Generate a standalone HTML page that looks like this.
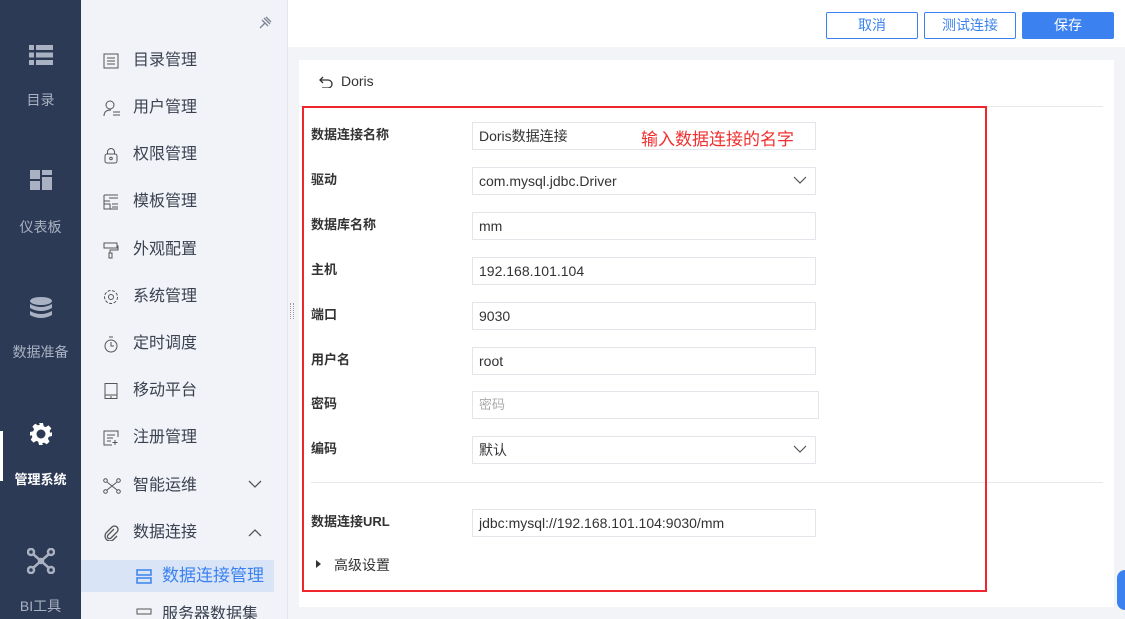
<!DOCTYPE html>
<html><head><meta charset="utf-8"><style>
*{box-sizing:border-box;margin:0;padding:0}
html,body{width:1125px;height:619px;overflow:hidden}
body{position:relative;background:#f3f4f7;font-family:"Liberation Sans","Noto Sans CJK SC",sans-serif;color:#333}
.side{position:absolute;left:0;top:0;width:81px;height:619px;background:#2d3a55}
.ic{position:absolute;left:0;width:81px}
.ic svg{display:block;margin:0 auto}
.lb{position:absolute;left:0;width:81px;text-align:center;color:#a9b1c2;font-size:14px;line-height:18px}
.menu{position:absolute;left:81px;top:0;width:207px;height:619px;background:#f1f3f8;border-right:1px solid #e3e6ec}
.mi{position:absolute;left:22px;font-size:16px;color:#3a4150;height:24px;line-height:24px}
.mi svg{position:absolute;left:0;top:4px}
.mi span{position:absolute;left:30px;white-space:nowrap}
.top{position:absolute;left:288px;top:0;width:837px;height:47px;background:#fff}
.btn{position:absolute;top:12px;height:27px;border:1px solid #3b82f0;color:#3b82f0;font-size:14px;text-align:center;line-height:25px;border-radius:2px;background:#fff}
.card{position:absolute;left:299px;top:60px;width:815px;height:547px;background:#fff}
.lab{position:absolute;left:311px;font-size:13px;font-weight:bold;color:#333;line-height:18px}
.inp{position:absolute;left:472px;width:344px;height:28px;border:1px solid #e3e5ea;font-size:14px;line-height:26px;padding-left:6px;color:#333;background:#fff}
.chev{position:absolute;right:8px;top:8px}
</style></head><body>
<div class="side">
 <div class="ic" style="top:45px"><svg width="24" height="20"><g fill="#a9b1c2"><rect x="0" y="0" width="5" height="5"/><rect x="7" y="0" width="17" height="5"/><rect x="0" y="7.5" width="5" height="5"/><rect x="7" y="7.5" width="17" height="5"/><rect x="0" y="15" width="5" height="5"/><rect x="7" y="15" width="17" height="5"/></g></svg></div>
 <div class="lb" style="top:91px">目录</div>
 <div class="ic" style="top:170px"><svg width="22" height="20"><g fill="#a9b1c2"><rect x="0" y="0" width="10" height="9"/><rect x="12" y="0" width="10" height="5"/><rect x="0" y="11" width="10" height="9"/><rect x="12" y="7" width="10" height="13"/></g></svg></div>
 <div class="lb" style="top:218px">仪表板</div>
 <div class="ic" style="top:297px"><svg width="24" height="22"><g fill="#a9b1c2"><ellipse cx="12" cy="4" rx="11" ry="4"/><path d="M1 7q11 6 22 0v4q-11 6-22 0z"/><path d="M1 14q11 6 22 0v4q-11 6-22 0z"/></g></svg></div>
 <div class="lb" style="top:343px">数据准备</div>
 <div style="position:absolute;left:0;top:431px;width:3px;height:50px;background:#fff"></div>
 <div class="ic" style="top:422px"><svg width="24" height="24" viewBox="0 0 24 24"><path fill="#fff" d="M10 1h4l.7 3.2 2 .9 2.8-1.7 2.8 2.8-1.7 2.8.9 2L23 10v4l-3.2.7-.9 2 1.7 2.8-2.8 2.8-2.8-1.7-2 .9L14 23h-4l-.7-3.2-2-.9-2.8 1.7-2.8-2.8 1.7-2.8-.9-2L1 14v-4l3.2-.7.9-2L3.4 4.5l2.8-2.8L9 3.4l2-.9z"/><circle cx="12" cy="12" r="4.5" fill="#2d3a55"/></svg></div>
 <div class="lb" style="top:471px;color:#fff;font-weight:bold;font-size:13px">管理系统</div>
 <div class="ic" style="top:548px"><svg width="28" height="26" viewBox="0 0 28 26"><g stroke="#a9b1c2" stroke-width="2.5" fill="none"><circle cx="4" cy="4" r="3"/><circle cx="24" cy="4" r="3"/><circle cx="4" cy="22" r="3"/><circle cx="24" cy="22" r="3"/><path d="M6 6l16 14M22 6L6 20"/><circle cx="14" cy="13" r="2"/></g></svg></div>
 <div class="lb" style="top:597px">BI工具</div>
</div>
<div class="menu">
 <svg style="position:absolute;left:177px;top:14px" width="16" height="16"><g stroke="#7a8294" stroke-width="1.3" fill="none"><path d="M2 14l5-5M6 4l6 6M8 3l5 5M4 6l6 6"/></g></svg>
 <div class="mi" style="top:49px"><svg width="16" height="16"><rect x="1" y="1" width="14" height="14" fill="none" stroke="#555"/><path d="M4 5h8M4 8h8M4 11h8" stroke="#555"/></svg><span>目录管理</span></div>
 <div class="mi" style="top:96px"><svg width="18" height="16"><circle cx="7" cy="5" r="4" fill="none" stroke="#555"/><path d="M1 16q0-6 7-6M10 12h7M10 15h7" stroke="#555" fill="none"/></svg><span>用户管理</span></div>
 <div class="mi" style="top:143px"><svg width="16" height="17"><rect x="2" y="7" width="12" height="9" rx="2" fill="none" stroke="#555"/><path d="M4.5 7V5a3.5 3.5 0 0 1 7 0v2" fill="none" stroke="#555"/><circle cx="8" cy="11.5" r="1.3" fill="none" stroke="#555"/></svg><span>权限管理</span></div>
 <div class="mi" style="top:190px"><svg width="16" height="16"><path d="M1 1h14M1 1v14h14M6 4h9M1 7h6M1 10h6v5M9 10h6M9 13h6" fill="none" stroke="#555"/></svg><span>模板管理</span></div>
 <div class="mi" style="top:238px"><svg width="16" height="17"><rect x="1" y="1" width="13" height="5" fill="none" stroke="#555"/><path d="M14 4h1v4H7v3M6 11h3v5H6z" fill="none" stroke="#555"/></svg><span>外观配置</span></div>
 <div class="mi" style="top:285px"><svg width="16" height="16"><circle cx="8" cy="8" r="6.5" fill="none" stroke="#555" stroke-dasharray="3 1.5"/><circle cx="8" cy="8" r="2.5" fill="none" stroke="#555"/></svg><span>系统管理</span></div>
 <div class="mi" style="top:332px"><svg width="16" height="17"><circle cx="8" cy="10" r="6" fill="none" stroke="#555"/><path d="M6 1h4M8 6v4h3" fill="none" stroke="#555"/></svg><span>定时调度</span></div>
 <div class="mi" style="top:379px"><svg width="16" height="16"><rect x="2" y="0.5" width="12" height="15" fill="none" stroke="#555"/><path d="M2 12h12M7 14h2" stroke="#555"/></svg><span>移动平台</span></div>
 <div class="mi" style="top:426px"><svg width="16" height="16"><path d="M15 7V1H1v14h8M4 5h8M4 8h6M4 11h4M12 10v5M9.5 12.5h5" fill="none" stroke="#555"/></svg><span>注册管理</span></div>
 <div class="mi" style="top:474px"><svg width="18" height="16"><g fill="none" stroke="#555"><circle cx="2.5" cy="2.5" r="1.8"/><circle cx="15.5" cy="2.5" r="1.8"/><circle cx="2.5" cy="13.5" r="1.8"/><circle cx="15.5" cy="13.5" r="1.8"/><path d="M4 4l10 8M14 4L4 12"/></g></svg><span>智能运维</span></div>
 <svg style="position:absolute;left:167px;top:480px" width="14" height="9"><path d="M1 1l6 6 6-6" fill="none" stroke="#555" stroke-width="1.3"/></svg>
 <div class="mi" style="top:521px"><svg width="16" height="16"><path d="M11 4L5 10a2 2 0 0 0 3 3l6-6a3.5 3.5 0 0 0-5-5L3 8a5 5 0 0 0 7 7l4-4" fill="none" stroke="#555" stroke-width="1.3"/></svg><span>数据连接</span></div>
 <svg style="position:absolute;left:167px;top:528px" width="14" height="9"><path d="M1 8l6-6 6 6" fill="none" stroke="#555" stroke-width="1.3"/></svg>
 <div style="position:absolute;left:0;top:560px;width:193px;height:32px;background:#d9e4f7"></div>
 <div class="mi" style="top:564px;left:55px;color:#3b82f0;font-size:17px"><svg width="16" height="16"><rect x="1" y="2" width="14" height="5" fill="none" stroke="#3b82f0" stroke-width="1.5"/><rect x="1" y="10" width="14" height="5" fill="none" stroke="#3b82f0" stroke-width="1.5"/></svg><span style="left:26px">数据连接管理</span></div>
 <div class="mi" style="top:603px;left:55px"><svg width="16" height="16"><rect x="1" y="2" width="14" height="5" fill="none" stroke="#555"/></svg><span style="left:26px">服务器数据集</span></div>
</div>
<div style="position:absolute;left:290px;top:303px;width:4px;height:16px;border-left:1px dotted #999;border-right:1px dotted #999"></div>
<div class="top">
 <div class="btn" style="left:538px;width:92px">取消</div>
 <div class="btn" style="left:636px;width:92px">测试连接</div>
 <div class="btn" style="left:734px;width:92px;background:#3b82f0;color:#fff">保存</div>
</div>
<div class="card">
 <svg style="position:absolute;left:20px;top:16px" width="14" height="12"><path d="M4 1L1 4l3 3M1 4h8a4 4 0 0 1 0 8H3" fill="none" stroke="#333" stroke-width="1.3"/></svg>
 <div style="position:absolute;left:42px;top:13px;font-size:14px;color:#333">Doris</div>
 <div style="position:absolute;left:0;top:46px;width:804px;height:1px;background:#e6e8ec"></div>
 <div style="position:absolute;left:12px;top:422px;width:792px;height:1px;background:#e6e8ec"></div>
</div>
<div class="lab" style="top:126px">数据连接名称</div><div class="inp" style="top:122px">Doris数据连接</div>
<div style="position:absolute;left:641px;top:125px;color:#f03030;font-size:17px">输入数据连接的名字</div>
<div class="lab" style="top:171px">驱动</div><div class="inp" style="top:167px">com.mysql.jdbc.Driver<svg class="chev" width="14" height="9"><path d="M1 1l6 6 6-6" fill="none" stroke="#555" stroke-width="1.2"/></svg></div>
<div class="lab" style="top:216px">数据库名称</div><div class="inp" style="top:212px">mm</div>
<div class="lab" style="top:261px">主机</div><div class="inp" style="top:257px">192.168.101.104</div>
<div class="lab" style="top:306px">端口</div><div class="inp" style="top:302px">9030</div>
<div class="lab" style="top:351px">用户名</div><div class="inp" style="top:347px">root</div>
<div class="lab" style="top:395px">密码</div><div class="inp" style="top:391px;width:347px;color:#aaa;font-size:13px">密码</div>
<div class="lab" style="top:440px">编码</div><div class="inp" style="top:436px">默认<svg class="chev" width="14" height="9"><path d="M1 1l6 6 6-6" fill="none" stroke="#555" stroke-width="1.2"/></svg></div>
<div class="lab" style="top:513px">数据连接URL</div><div class="inp" style="top:509px">jdbc:mysql://192.168.101.104:9030/mm</div>
<div style="position:absolute;left:316px;top:560px;width:0;height:0;border-left:5px solid #333;border-top:4px solid transparent;border-bottom:4px solid transparent"></div>
<div style="position:absolute;left:334px;top:555px;font-size:14px;color:#333">高级设置</div>
<div style="position:absolute;left:302px;top:106px;width:685px;height:486px;border:2px solid #f0262e"></div>
<div style="position:absolute;left:1117px;top:570px;width:16px;height:40px;border-radius:8px;background:#3b82f0"></div>
</body></html>
